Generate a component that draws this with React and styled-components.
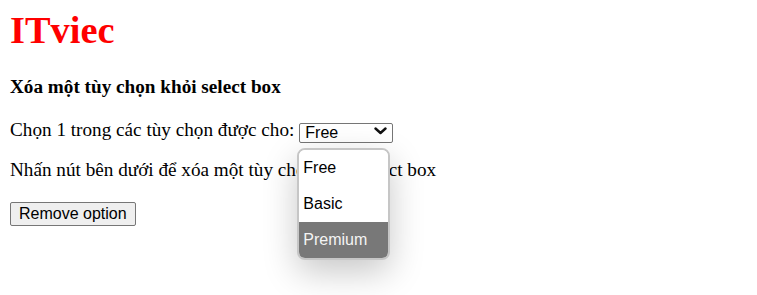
import React from "react";
import styled, { createGlobalStyle } from "styled-components";

const Global = createGlobalStyle`
  html, body { margin: 0; padding: 0; background: #fff; }
  body { font-family: "Liberation Serif", "Times New Roman", serif; color: #000; }
`;

const Page = styled.div`
  padding: 8px 10px 0;
  min-height: 295px;
  box-sizing: border-box;
`;

const Title = styled.h1`
  margin: 0;
  font-size: 38.4px;
  line-height: 44px;
  font-weight: bold;
  color: #ff0000;
`;

const Heading = styled.h3`
  margin: 24px 0 0;
  font-size: 19.2px;
  line-height: 22px;
  font-weight: bold;
`;

const Para = styled.p`
  margin: ${(p) => p.$top}px 0 0;
  font-size: 19.2px;
  line-height: 22px;
  height: 22px;
`;

const SelectWrap = styled.span`
  position: relative;
  display: inline-block;
  vertical-align: -2px;
  margin-left: 5px;
`;

const Select = styled.select`
  appearance: none;
  -webkit-appearance: none;
  width: 94px;
  height: 20px;
  box-sizing: border-box;
  border: 1px solid #767676;
  border-radius: 2px;
  background: #fff;
  padding: 0 0 0 5px;
  font-family: "Liberation Sans", Arial, sans-serif;
  font-size: 16px;
  line-height: 18px;
  color: #000;
`;

const Chevron = styled.svg`
  position: absolute;
  right: 6px;
  top: 6px;
  pointer-events: none;
`;

const Popup = styled.div`
  position: absolute;
  left: -2px;
  top: 27px;
  width: 93px;
  box-sizing: border-box;
  border: 2px solid #c6c6c6;
  border-radius: 8px;
  background: #fff;
  overflow: hidden;
  box-shadow: 0 12px 34px rgba(0, 0, 0, 0.22);
  z-index: 2;
`;

const Option = styled.div`
  height: 36px;
  line-height: 36px;
  padding-left: 4px;
  font-family: "Liberation Sans", Arial, sans-serif;
  font-size: 16px;
  background: ${(p) => (p.$active ? "#787878" : "#fff")};
  color: ${(p) => (p.$active ? "#f4f4f4" : "#000")};
  white-space: nowrap;
`;

const Button = styled.button`
  font-family: "Liberation Sans", Arial, sans-serif;
  font-size: 16px;
  line-height: 19px;
  padding: 1px 8px 2px;
  background: #efefef;
  border: 1px solid #767676;
  border-radius: 2px;
  color: #000;
`;

export default function App() {
  return (
    <>
      <Global />
      <Page>
        <Title>ITviec</Title>
        <Heading>Xóa một tùy chọn khỏi select box</Heading>
        <Para $top={21}>
          Chọn 1 trong các tùy chọn được cho:
          <SelectWrap>
            <Select defaultValue="free">
              <option value="free">Free</option>
              <option value="basic">Basic</option>
              <option value="premium">Premium</option>
            </Select>
            <Chevron width="13" height="8" viewBox="0 0 13 8">
              <path d="M1.5 1.5 L6.5 6 L11.5 1.5" fill="none" stroke="#111" strokeWidth="2.4" strokeLinecap="round" strokeLinejoin="round" />
            </Chevron>
            <Popup>
              <Option>Free</Option>
              <Option>Basic</Option>
              <Option $active>Premium</Option>
            </Popup>
          </SelectWrap>
        </Para>
        <Para $top={18}>Nhấn nút bên dưới để xóa một tùy chọn khỏi select box</Para>
        <Para $top={21}>
          <Button>Remove option</Button>
        </Para>
      </Page>
    </>
  );
}
